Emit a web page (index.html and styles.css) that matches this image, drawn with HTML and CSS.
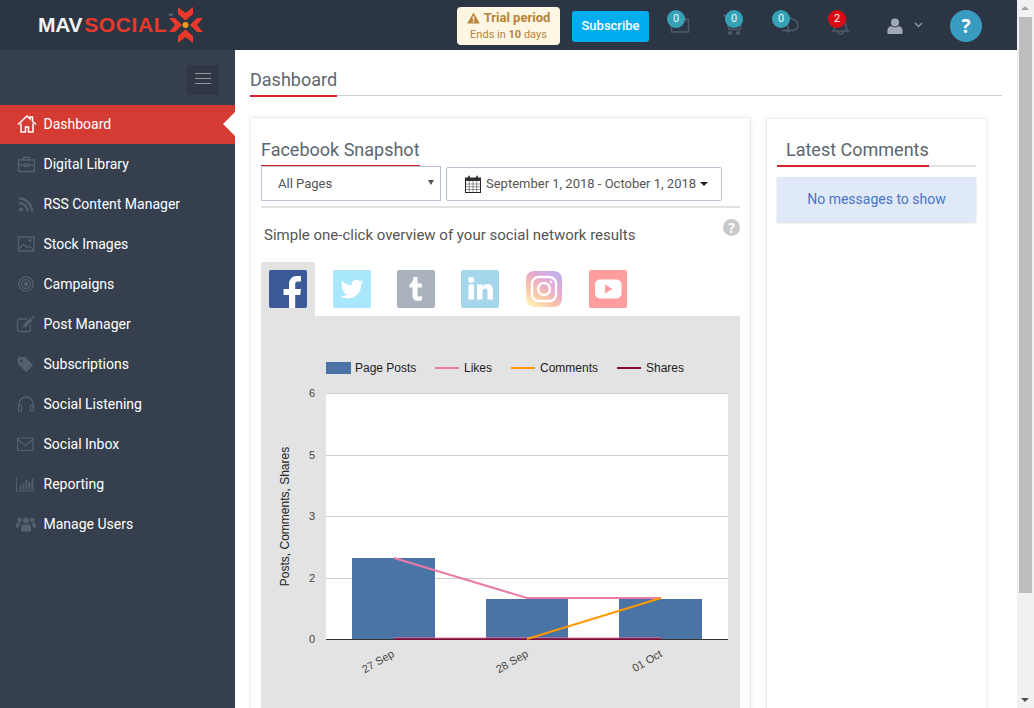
FILE: index.html
```html
<!DOCTYPE html>
<html lang="en">
<head>
<meta charset="utf-8">
<title>MavSocial Dashboard</title>
<link rel="stylesheet" href="styles.css">
</head>
<body>
<div class="page">
  <header class="topbar">
    <a class="logo"><span class="logo-mav">MAV</span><span class="logo-social">SOCIAL</span><sup class="logo-tm">™</sup>
      <svg class="logo-mark" viewBox="168 6 40 40" width="40" height="40">
        <g fill="#e8392a">
          <polygon points="180,8 187.5,14 195,8 195,15 187.5,21.5 180,15"/>
          <polygon points="180,44 187.5,38 195,44 195,37 187.5,30.5 180,37"/>
          <polygon points="171,19 177,19 184,26 177,33 171,33 177,26"/>
          <polygon points="205,19 199,19 192,26 199,33 205,33 199,26"/>
        </g>
        <circle cx="187.5" cy="26" r="3" fill="#f39a1e"/>
      </svg>
    </a>
    <div class="top-actions">
      <div class="trial">
        <div class="trial-title"><svg viewBox="0 0 14 13" width="13" height="12"><path d="M7 0.5 13.8 12.5H0.2Z" fill="#b9863c"/><rect x="6.2" y="4.5" width="1.6" height="4.4" fill="#fdf6e3"/><rect x="6.2" y="9.7" width="1.6" height="1.6" fill="#fdf6e3"/></svg><span>Trial period</span></div>
        <div class="trial-sub">Ends in <b>10</b> days</div>
      </div>
      <button class="subscribe">Subscribe</button>
      <div class="hicon hicon-mail">
        <svg viewBox="0 0 30 30" width="30" height="30" class="hsvg"><path d="M4.5 9.5h17v12.5h-17z M10 17l5-3 4-6" fill="none" stroke="#505b6b" stroke-width="1.5"/></svg>
        <span class="badge">0</span>
      </div>
      <div class="hicon hicon-cart">
        <svg viewBox="0 0 30 30" width="30" height="30" class="hsvg"><path d="M-2 5.5h3l3 14h11l2-10" fill="none" stroke="#505b6b" stroke-width="1.5"/><circle cx="5" cy="23" r="2" fill="#505b6b"/><circle cx="13" cy="23" r="2" fill="#505b6b"/></svg>
        <span class="badge">0</span>
      </div>
      <div class="hicon hicon-cloud">
        <svg viewBox="0 0 30 30" width="30" height="30" class="hsvg"><path d="M10 20.5H20a5.5 5.5 0 0 0 1-11 7 7 0 0 0-7-1.500M16 15v7M13.500 19.500 16 22l2.500-2.500" fill="none" stroke="#505b6b" stroke-width="1.5"/></svg>
        <span class="badge">0</span>
      </div>
      <div class="hicon hicon-bell">
        <svg viewBox="0 0 30 30" width="30" height="30" class="hsvg"><path d="M12.500 9a5 5 0 0 1 5 5c0 4 1 5.500 2.500 7H5c1.500-1.500 2.500-3 2.500-7a5 5 0 0 1 5-5zM10 21.500a2.500 2.500 0 0 0 5 0" fill="none" stroke="#505b6b" stroke-width="1.500"/></svg>
        <span class="badge badge-red">2</span>
      </div>
      <svg class="user-icon" viewBox="0 0 18 18" width="16" height="16"><circle cx="9" cy="5" r="4.500" fill="#a0a8b6"/><path d="M0.500 17.500v-3.500c0-3 2-4.500 4-5 2.500 2 6.500 2 9 0 2 .5 4 2 4 5v3.500c0 .3-.3.5-.5.500H1c-.2 0-.5-.2-.5-.5z" fill="#a0a8b6"/></svg>
      <svg class="chev-icon" viewBox="0 0 9 6" width="9" height="6"><path d="M1 1l3.500 3.500L8 1" fill="none" stroke="#8a93a1" stroke-width="1.500"/></svg>
      <div class="help-circle">?</div>
    </div>
  </header>
  <div class="body-row">
    <aside class="sidebar">
      <div class="toggle-row"><button class="toggle"><span></span><span></span><span></span></button></div>
      <nav class="nav">
        <a class="nav-item active"><svg class="nav-ico" viewBox="0 0 20 20"><path d="M1 10.500 10 2l3 2.800V3h2.500v4.200L19 10.500M4 9.500V18h4.500v-5h3v5H16V9.500" fill="none" stroke="#fff" stroke-width="1.500"/></svg><span>Dashboard</span></a>
        <a class="nav-item"><svg class="nav-ico" viewBox="0 0 20 20"><path d="M1.500 6h16v11.500h-16zM6.500 6V3.500h6V6M1.500 11h6M11.500 11h6M7.500 9.800h4v2.600h-4z" fill="none" stroke="#55606f" stroke-width="1.300"/></svg><span>Digital Library</span></a>
        <a class="nav-item"><svg class="nav-ico" viewBox="0 0 20 20"><circle cx="4" cy="15.500" r="2" fill="#55606f"/><path d="M2 9a8.500 8.500 0 0 1 8.500 8.500M2 4.500a13 13 0 0 1 13 13" fill="none" stroke="#55606f" stroke-width="2.400"/></svg><span>RSS Content Manager</span></a>
        <a class="nav-item"><svg class="nav-ico" viewBox="0 0 20 20"><path d="M1.500 3h15.500v14H1.500z" fill="none" stroke="#55606f" stroke-width="1.300"/><path d="M2 15l4.500-5 3.500 3.500 2-1.500 4.500 3.500" fill="none" stroke="#55606f" stroke-width="1.200"/><circle cx="13" cy="6.500" r="1.400" fill="#55606f"/></svg><span>Stock Images</span></a>
        <a class="nav-item"><svg class="nav-ico" viewBox="0 0 20 20" fill="none" stroke="#55606f"><circle cx="9" cy="10" r="7.200" stroke-width="1.300"/><circle cx="9" cy="10" r="4.500" stroke-width="1.300"/><circle cx="9" cy="10" r="1.800" fill="#55606f"/></svg><span>Campaigns</span></a>
        <a class="nav-item"><svg class="nav-ico" viewBox="0 0 20 20"><path d="M13.500 11v5c0 1-.7 1.500-1.500 1.500H2c-1 0-1.500-.7-1.500-1.500V6.500C.5 5.500 1.200 5 2 5h8" fill="none" stroke="#55606f" stroke-width="1.400"/><path d="M6.500 10.500 13.500 3.500l2.500 2.500-7 7-3 .5zM14.500 2.500l1-1 2.500 2.500-1 1z" fill="#55606f"/></svg><span>Post Manager</span></a>
        <a class="nav-item"><svg class="nav-ico" viewBox="0 0 20 20"><path d="M1 4.500C1 3.500 1.500 3 2.500 3H8l7.500 7.500c.5.500.5 1 0 1.500L10 17.500c-.5.500-1 .5-1.500 0L1 10zM4.500 5.200a1.500 1.500 0 1 0 .01 0z" fill="#55606f" fill-rule="evenodd"/></svg><span>Subscriptions</span></a>
        <a class="nav-item"><svg class="nav-ico" viewBox="0 0 20 20"><path d="M2 13V10a7 7 0 0 1 14 0v3" fill="none" stroke="#55606f" stroke-width="1.400"/><rect x="1.600" y="11" width="3" height="6.500" rx="1" fill="none" stroke="#55606f" stroke-width="1.200"/><rect x="13.400" y="11" width="3" height="6.500" rx="1" fill="none" stroke="#55606f" stroke-width="1.200"/></svg><span>Social Listening</span></a>
        <a class="nav-item"><svg class="nav-ico" viewBox="0 0 20 20"><path d="M.6 4h15.300v12.500H.6zM.6 5.500l7.650 6 7.650-6" fill="none" stroke="#55606f" stroke-width="1.200"/></svg><span>Social Inbox</span></a>
        <a class="nav-item"><svg class="nav-ico" viewBox="0 0 20 20"><path d="M-.5 3v14h18" fill="none" stroke="#55606f" stroke-width="1"/><path d="M2.500 11.500h1.800V15.500H2.500zM5.500 9.500h1.800V15.500H5.500zM8.500 6h1.800V15.500H8.500zM11.500 8h1.800V15.500H11.500zM14.500 4.500h1.800V15.500H14.500z" fill="#55606f"/></svg><span>Reporting</span></a>
        <a class="nav-item"><svg class="nav-ico" viewBox="0 0 20 20"><g fill="#55606f"><circle cx="9" cy="6.500" r="3"/><path d="M4 17.500v-3.500c0-2.500 1.500-3.500 3-3.800 1.200 .8 2.800 .8 4 0 1.500.3 3 1.300 3 3.800v3.500z"/><circle cx="2.800" cy="6" r="2.300"/><circle cx="15.200" cy="6" r="2.300"/><path d="M-1 13.500V11c0-1.500 1-2.400 2.200-2.600.8.600 1.700 .8 2.500 .6-.3 1-1.500 1.500-1.700 4.500zM19 13.500V11c0-1.500-1-2.400-2.200-2.600-.8.600-1.700 .8-2.500 .6 .3 1 1.500 1.500 1.700 4.500z"/></g></svg><span>Manage Users</span></a>
      </nav>
    </aside>
    <main class="main">
      <div class="page-title"><h1>Dashboard</h1></div>
      <div class="cards">
        <section class="card card-snapshot">
          <h2 class="card-title">Facebook Snapshot</h2>
          <div class="filters">
            <div class="select-box"><span>All Pages</span><i class="caret-sm"></i></div>
            <div class="date-box">
              <svg viewBox="0 0 18 18" width="18" height="18"><rect x="1.500" y="3" width="15" height="14.500" fill="#fff" stroke="#222" stroke-width="1"/><rect x="1.500" y="3" width="15" height="3" fill="#333"/><path d="M1.500 9h15M1.500 11.750h15M1.500 14.500h15M5.250 6v11.500M9 6v11.500M12.750 6v11.500" stroke="#444" stroke-width=".55"/><path d="M5 .8v4M13 .8v4" stroke="#222" stroke-width="1.500"/></svg>
              <span>September 1, 2018 - October 1, 2018</span><i class="caret-date"></i>
            </div>
          </div>
          <hr class="rule">
          <div class="intro"><p>Simple one-click overview of your social network results</p><span class="help-sm">?</span></div>
          <div class="tabs">
            <div class="tab tab-active"><svg viewBox="0 0 38 38" width="38" height="38"><rect width="38" height="38" rx="2" fill="#3b5998"/><path transform="translate(3 3)" d="M17 38V22h-5.500v-6H17v-4.500C17 6 20.300 3 25 3c2.200 0 4 .2 4 .2v5.300h-2.800c-2.500 0-3 1.200-3 3V16H29l-.8 6h-5V38z" fill="#fff"/></svg></div>
            <div class="tab"><svg viewBox="0 0 38 38" width="38" height="38"><rect width="38" height="38" rx="2" fill="#a9e7fc"/><g transform="translate(7.500 7.500) scale(.96)"><path fill="#fff" d="M23.953 4.570a10 10 0 01-2.825.775 4.958 4.958 0 002.163-2.723c-.951.555-2.005.959-3.127 1.184a4.920 4.920 0 00-8.384 4.482C7.690 8.095 4.067 6.130 1.640 3.162a4.822 4.822 0 00-.666 2.475c0 1.710.870 3.213 2.188 4.096a4.904 4.904 0 01-2.228-.616v.060a4.923 4.923 0 003.946 4.827 4.996 4.996 0 01-2.212.085 4.936 4.936 0 004.604 3.417 9.867 9.867 0 01-6.102 2.105c-.390 0-.779-.023-1.170-.067a13.995 13.995 0 007.557 2.209c9.053 0 13.998-7.496 13.998-13.985 0-.210 0-.420-.015-.630A9.935 9.935 0 0024 4.590z"/></g></svg></div>
            <div class="tab"><svg viewBox="0 0 38 38" width="38" height="38"><rect width="38" height="38" rx="2" fill="#aab3bd"/><path d="M16.500 7h4v6.500h4.500v4h-4.500v7c0 1.500.7 2 2 2 1 0 1.700-.2 2.500-.6V30c-1.200.6-2.700 .9-4 .9-3.800 0-5.500-2.300-5.500-5.400V17.500h-3v-3C15 13.500 16 10.500 16.500 7z" fill="#fff"/></svg></div>
            <div class="tab"><svg viewBox="0 0 38 38" width="38" height="38"><rect width="38" height="38" rx="2" fill="#a6d6ec"/><g fill="#fff"><rect x="7.500" y="14.500" width="5.500" height="15"/><circle cx="10.200" cy="10" r="3"/><path d="M16 14.500h5.300v2.200c1-1.600 2.700-2.600 5-2.600 4.200 0 5.700 2.700 5.700 7v8.400h-5.500v-7.600c0-2-.5-3.300-2.300-3.300-2 0-2.700 1.500-2.700 3.300v7.600H16z"/></g></svg></div>
            <div class="tab tab-insta"><svg viewBox="0 0 36 36" width="36" height="36"><defs><linearGradient id="ig" x1="0.150" y1="1" x2="0.850" y2="0"><stop offset="0" stop-color="#fff0b8"/><stop offset=".35" stop-color="#f8c4a8"/><stop offset=".65" stop-color="#e6a8d2"/><stop offset="1" stop-color="#bfb2ee"/></linearGradient></defs><rect width="36" height="36" rx="8" fill="url(#ig)"/><rect x="6" y="6" width="24" height="24" rx="6.500" fill="none" stroke="#fff" stroke-width="2.400"/><circle cx="18" cy="18" r="6" fill="none" stroke="#fff" stroke-width="2.400"/><circle cx="25" cy="11" r="1.500" fill="#fff"/></svg></div>
            <div class="tab"><svg viewBox="0 0 38 38" width="38" height="38"><rect width="38" height="38" rx="2" fill="#ff9c9e"/><rect x="6" y="9.500" width="26.500" height="19" rx="5" fill="#fff"/><path d="M16 14.500 23.500 19 16 23.500z" fill="#ff9c9e"/></svg></div>
          </div>
          <div class="chart-panel">
            <svg class="chart" viewBox="261 316 479 392" width="479" height="392">
              <rect x="326" y="393" width="402" height="246" fill="#fff"/>
              <g stroke="#cfcfcf" stroke-width="1"><path d="M326 393.500h402M326 455.500h402M326 516.500h402M326 578.500h402"/></g>
              <g fill="#4a73a6"><rect x="352" y="558" width="83" height="81"/><rect x="486" y="599" width="82" height="40"/><rect x="619" y="599" width="83" height="40"/></g>
              <path d="M326 639.500h402" stroke="#333" stroke-width="1"/>
              <polyline points="394,638 661,638" fill="none" stroke="#e97ba4" stroke-width="1"/>
              <polyline points="394,639 661,639" fill="none" stroke="#8b0a3c" stroke-width="1.500"/>
              <polyline points="394,558 527,598 661,598" fill="none" stroke="#e97ba4" stroke-width="2"/>
              <polyline points="527,639 661,598" fill="none" stroke="#ff9900" stroke-width="2"/>
              <g class="ch-text">
                <rect x="326" y="362" width="25" height="12" fill="#4a73a6"/>
                <text x="355" y="372">Page Posts</text>
                <path d="M435 368h24" stroke="#e97ba4" stroke-width="2"/>
                <text x="464" y="372">Likes</text>
                <path d="M511 368h24" stroke="#ff9900" stroke-width="2"/>
                <text x="540" y="372">Comments</text>
                <path d="M617 368h24" stroke="#8b0a3c" stroke-width="2"/>
                <text x="646" y="372">Shares</text>
                <text x="289" y="516.500" text-anchor="middle" transform="rotate(-90 289 516.500)">Posts, Comments, Shares</text>
              </g>
              <g class="ch-axis">
                <text x="315" y="397" text-anchor="end">6</text>
                <text x="315" y="459" text-anchor="end">5</text>
                <text x="315" y="520" text-anchor="end">3</text>
                <text x="315" y="582" text-anchor="end">2</text>
                <text x="315" y="643" text-anchor="end">0</text>
                <text x="395" y="656" text-anchor="end" transform="rotate(-30 395 656)">27 Sep</text>
                <text x="529" y="656" text-anchor="end" transform="rotate(-30 529 656)">28 Sep</text>
                <text x="663" y="656" text-anchor="end" transform="rotate(-30 663 656)">01 Oct</text>
              </g>
            </svg>
          </div>
        </section>
        <section class="card card-comments">
          <div class="comments-head"><h2 class="card-title comments-title">Latest Comments</h2></div>
          <div class="alert">No messages to show</div>
        </section>
      </div>
    </main>
  </div>
</div>
<div class="scrollbar">
  <i class="arrow-up"></i>
  <div class="thumb"></div>
  <i class="arrow-down"></i>
</div>
</body>
</html>
```
FILE: styles.css
```css
* { box-sizing: border-box; }
html, body { height: 100%; }
body {
  margin: 0;
  height: 708px;
  overflow: hidden;
  display: flex;
  font-family: Roboto, "Liberation Sans", sans-serif;
  background: #fff;
  color: #555;
}
h1, h2, p { margin: 0; font-weight: 400; }
.page { width: 1017px; height: 708px; display: flex; flex-direction: column; }

/* top bar */
.topbar { height: 50px; flex: none; background: #2b3543; display: flex; align-items: center; }
.logo { display: flex; align-items: center; padding-left: 38px; font-family: "Liberation Sans", sans-serif; font-weight: 700; font-size: 21px; position: relative; }
.logo-mav { color: #f2f2f2; letter-spacing: -.3px; }
.logo-social { color: #e8392a; margin-left: 2px; letter-spacing: .6px; }
.logo-tm { position: absolute; left: 168px; top: 7px; font-size: 5px; color: #aaa; font-weight: 400; }
.logo-mark { flex: none; margin-left: -1px; }
.top-actions { margin-left: auto; display: flex; align-items: center; padding: 2px 35px 0 0; }
.trial { width: 103px; height: 38px; background: #fdf6e3; border-radius: 4px; text-align: center; padding-top: 2px; color: #b5843a; }
.trial-title { display: flex; align-items: center; justify-content: center; gap: 4px; font-size: 13px; font-weight: 700; line-height: 17px; }
.trial-sub { font-size: 11px; line-height: 14px; margin-top: 2px; }
.subscribe { margin-left: 12px; width: 77px; height: 31px; border: 0; border-radius: 3px; background: #00aeef; color: #fff; font: 500 13px Roboto, sans-serif; padding: 0 0 2px; }
.hicon { position: relative; width: 30px; height: 30px; margin-top: -2px; }
.hicon-mail { margin-left: 18px; }
.hicon-cart { margin-left: 28px; }
.hicon-cloud { margin-left: 17px; }
.hicon-bell { margin-left: 26px; }
.hsvg { display: block; overflow: visible; }
.badge { position: absolute; left: 0; top: 0; width: 18px; height: 18px; border-radius: 50%; background: #35a3b5; color: #e8f6f8; font-size: 11px; line-height: 18px; text-align: center; }
.badge-red { background: #dc0a12; }
.user-icon { margin-left: 29px; flex: none; }
.chev-icon { margin-left: 11px; margin-bottom: 2px; flex: none; }
.help-circle { margin-left: 27px; width: 32px; height: 32px; border-radius: 50%; background: #3a9bc1; color: #fff; font: 700 19px/32px "Open Sans", sans-serif; text-align: center; }

/* layout */
.body-row { flex: 1; display: flex; min-height: 0; }
.sidebar { width: 235px; flex: none; background: #363f4d; }
.toggle-row { display: flex; justify-content: flex-end; padding: 15px 16px 0 0; height: 54px; }
.toggle { width: 32px; height: 30px; background: #2f3844; border: 0; border-radius: 4px; padding: 8px 8px 11px; display: flex; flex-direction: column; justify-content: space-between; }
.toggle span { display: block; height: 1px; background: #8f96a1; }
.nav { display: flex; flex-direction: column; }
.nav-item { height: 40px; display: flex; align-items: center; padding-left: 17px; gap: 6.500px; color: #fff; font-size: 14px; position: relative; }
.nav-ico { width: 20px; height: 20px; flex: none; overflow: visible; }
.nav-item.active { background: #d43c33; height: 39px; margin-top: 1px; padding-bottom: 1px; }
.nav-item.active::after { content: ""; position: absolute; right: 0; top: 7px; border: 12px solid transparent; border-right-color: #fff; border-left: 0; }

/* main */
.main { flex: 1; min-width: 0; padding: 0 15px; overflow: hidden; }
.page-title { margin-top: 17px; height: 29px; border-bottom: 1px solid #cfcfcf; display: flex; }
.page-title h1 { font-size: 18px; line-height: 26px; height: 30px; color: #5e6670; border-bottom: 2px solid #d8232a; }
.cards { display: flex; gap: 15px; margin-top: 21px; align-items: flex-start; }
.card { background: #fff; border: 1px solid #e9ecf1; border-radius: 2px; box-shadow: 0 0 4px rgba(60, 80, 120, .08); padding: 20px 10px 0; }
.card-snapshot { width: 501px; height: 700px; }
.card-comments { width: 221px; height: 700px; margin-top: 1px; padding-top: 19px; }
.card-title { display: inline-block; vertical-align: top; font-size: 18px; line-height: 24px; height: 29px; color: #5e6670; border-bottom: 2px solid #d8232a; }
.filters { display: flex; gap: 5px; align-items: flex-end; margin-top: -1px; }
.select-box { width: 180px; height: 35px; border: 1px solid #b9c0d0; padding: 0 6px 0 16px; display: flex; align-items: center; justify-content: space-between; font-size: 13px; color: #555; }
.caret-sm { border: 3px solid transparent; border-top: 5px solid #555; border-bottom: 0; margin-top: -2px; }
.date-box { width: 276px; height: 34px; border: 1px solid #b9c0d0; border-radius: 2px; padding-left: 17px; display: flex; align-items: center; font-size: 13px; color: #555; }
.date-box svg { flex: none; margin-right: 4px; }
.caret-date { margin-left: 4px; border: 4px solid transparent; border-top-color: #222; border-bottom: 0; }
.date-box span { position: relative; top: -1px; }
.rule { margin: 5px 0 0; height: 2px; border: 0; background: #e2e2e2; }
.intro { display: flex; justify-content: space-between; margin-top: 17px; height: 20px; padding-left: 3px; }
.intro p { font-size: 15px; line-height: 20px; color: #555; }
.help-sm { width: 17px; height: 17px; margin-top: -6px; border-radius: 50%; background: #c9c9c9; color: #fff; font: 700 14px/17px "Open Sans", sans-serif; text-align: center; }
.tabs { display: flex; gap: 10px; margin-top: 17px; }
.tab { width: 54px; height: 54px; padding: 8px; border-radius: 3px 3px 0 0; }
.tab svg { display: block; }
.tab-active { background: #e3e3e3; }
.tab-insta { padding: 9px; }
.chart-panel { background: #e3e3e3; }
.chart { display: block; }
.ch-text text { font: 12px "Liberation Sans", sans-serif; fill: #222; }
.ch-axis text { font: 11px "Liberation Sans", sans-serif; fill: #444; }

/* comments */
.comments-head { height: 29px; border-bottom: 2px solid #e2e2e2; position: relative; }
.comments-title { padding-left: 9px; width: 152px; position: absolute; left: 0; top: 0; height: 29px; }
.alert { margin-top: 10px; height: 45px; background: #dfe9f7; color: #4a74c9; font-size: 14px; line-height: 44px; text-align: center; box-shadow: 0 1px 2px rgba(0, 0, 0, .15); }

/* scrollbar */
.scrollbar { width: 17px; height: 708px; flex: none; background: #f1f1f1; position: relative; }
.thumb { position: absolute; left: 2px; top: 17px; width: 13px; height: 576px; background: #bdbdbd; }
.arrow-up { position: absolute; left: 4px; top: 6px; border: 4px solid transparent; border-top: 0; border-bottom: 4px solid #a3a3a3; }
.arrow-down { position: absolute; left: 4px; bottom: 6px; border: 4px solid transparent; border-bottom: 0; border-top: 4px solid #505050; }
```
